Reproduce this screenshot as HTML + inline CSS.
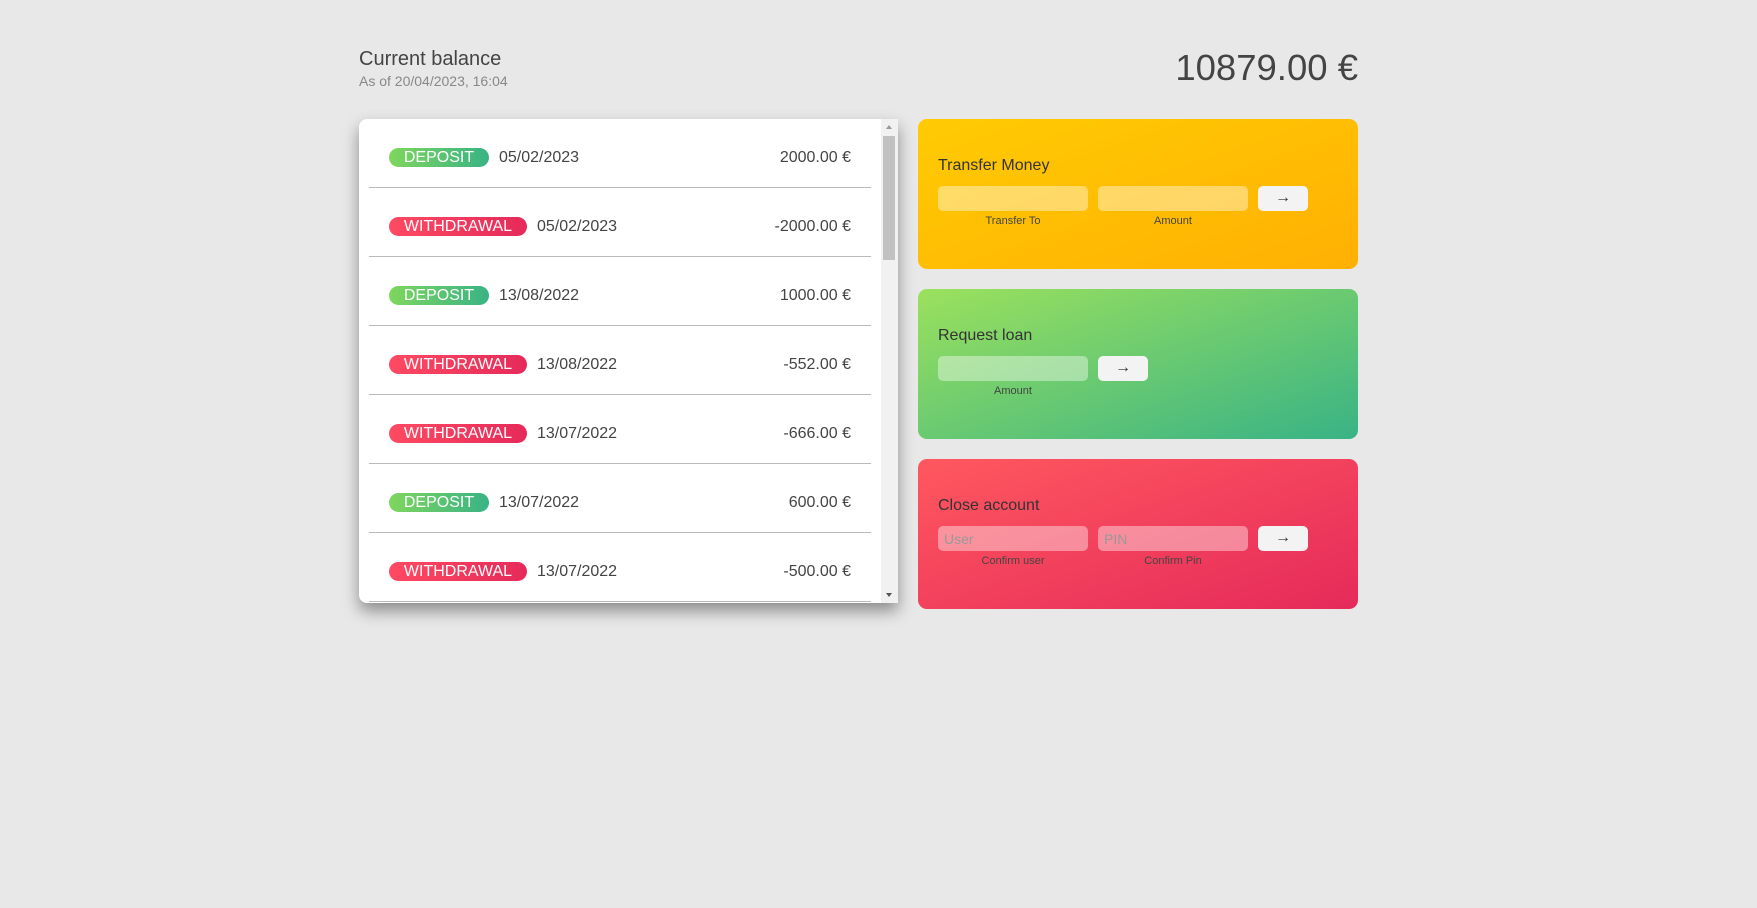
<!DOCTYPE html>
<html><head><meta charset="utf-8"><style>
*{margin:0;padding:0;box-sizing:border-box}
body{width:1757px;height:908px;background:#e8e8e8;font-family:"Liberation Sans",sans-serif;color:#444;position:relative;overflow:hidden}
.a{position:absolute}
.h1{left:359px;top:48px;font-size:20px;color:#444}
.h2{left:359px;top:73px;font-size:14px;color:#888}
.bal{right:399px;top:47px;font-size:36.5px;color:#444}
.mov{left:359px;top:119px;width:539px;height:484px;background:#fff;border-radius:8px 0 0 8px;box-shadow:0 8px 16px rgba(0,0,0,.4);overflow:hidden}
.row{position:absolute;left:10px;width:502px;height:69px;border-bottom:1px solid #bbb}
.badge{position:absolute;left:20px;top:29px;height:19px;border-radius:10px;color:#fff;font-size:16px;line-height:19px;text-align:center}
.dep{width:100px;background:linear-gradient(to right,#7fd65d,#39b385)}
.wd{width:138px;background:linear-gradient(to right,#ff4a62,#e52a5a)}
.date{position:absolute;top:29px;font-size:16px;line-height:19px;color:#444}
.amt{position:absolute;right:20px;top:29px;font-size:16px;line-height:19px;color:#444}
.sb{position:absolute;right:0;top:0;width:17px;height:484px;background:#f1f1f1}
.thumb{position:absolute;left:2px;top:17px;width:12px;height:124px;background:#c1c1c1}
.card{left:918px;width:440px;height:150px;border-radius:9px}
.card .t{position:absolute;left:20px;top:38px;font-size:16px;color:#333}
.inp{position:absolute;top:67px;width:150px;height:25px;border-radius:5px;background:rgba(255,255,255,.4);font-size:14px;color:#999;padding:5px 6px}
.btn{position:absolute;top:67px;width:50px;height:25px;border-radius:5px;background:#f3f3f3;font-size:16px;text-align:center;line-height:24px;color:#333}
.lb{position:absolute;top:96px;width:150px;text-align:center;font-size:11px;color:#444}
</style></head><body>
<div class="a h1">Current balance</div>
<div class="a h2">As of 20/04/2023, 16:04</div>
<div class="a bal">10879.00 €</div>
<div class="a mov">
<div class="row" style="top:0"><div class="badge dep">DEPOSIT</div><div class="date" style="left:130px">05/02/2023</div><div class="amt">2000.00 €</div></div>
<div class="row" style="top:69px"><div class="badge wd">WITHDRAWAL</div><div class="date" style="left:168px">05/02/2023</div><div class="amt">-2000.00 €</div></div>
<div class="row" style="top:138px"><div class="badge dep">DEPOSIT</div><div class="date" style="left:130px">13/08/2022</div><div class="amt">1000.00 €</div></div>
<div class="row" style="top:207px"><div class="badge wd">WITHDRAWAL</div><div class="date" style="left:168px">13/08/2022</div><div class="amt">-552.00 €</div></div>
<div class="row" style="top:276px"><div class="badge wd">WITHDRAWAL</div><div class="date" style="left:168px">13/07/2022</div><div class="amt">-666.00 €</div></div>
<div class="row" style="top:345px"><div class="badge dep">DEPOSIT</div><div class="date" style="left:130px">13/07/2022</div><div class="amt">600.00 €</div></div>
<div class="row" style="top:414px"><div class="badge wd">WITHDRAWAL</div><div class="date" style="left:168px">13/07/2022</div><div class="amt">-500.00 €</div></div>
<div class="sb"><div style="position:absolute;left:5px;top:6px;border:3.5px solid transparent;border-bottom:4px solid #999;border-top:0"></div><div class="thumb"></div><div style="position:absolute;left:5px;bottom:6px;border:3.5px solid transparent;border-top:4px solid #555;border-bottom:0"></div></div>
</div>
<div class="a card" style="top:119px;background:linear-gradient(to top left,#ffb003,#ffcb03)"><div class="t">Transfer Money</div><div class="inp" style="left:20px"></div><div class="inp" style="left:180px"></div><div class="btn" style="left:340px">→</div><div class="lb" style="left:20px">Transfer To</div><div class="lb" style="left:180px">Amount</div></div>
<div class="a card" style="top:289px;background:linear-gradient(to top left,#39b385,#9be15d)"><div class="t">Request loan</div><div class="inp" style="left:20px"></div><div class="btn" style="left:180px">→</div><div class="lb" style="left:20px">Amount</div></div>
<div class="a card" style="top:459px;background:linear-gradient(to top left,#e52a5a,#ff585f)"><div class="t">Close account</div><div class="inp" style="left:20px">User</div><div class="inp" style="left:180px">PIN</div><div class="btn" style="left:340px">→</div><div class="lb" style="left:20px">Confirm user</div><div class="lb" style="left:180px">Confirm Pin</div></div>
</body></html>
